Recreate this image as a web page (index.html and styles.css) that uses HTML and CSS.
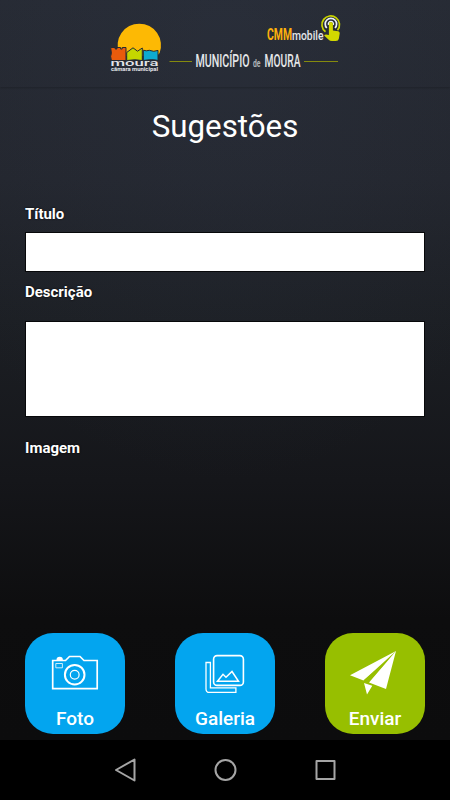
FILE: index.html
```
<!DOCTYPE html>
<html lang="pt">
<head>
    <meta charset="UTF-8">
    <meta name="viewport" content="width=device-width, initial-scale=1.0">
    <title>Sugestões - Município de Moura</title>
    <link rel="stylesheet" href="styles.css">
</head>
<body>
    <header class="header">
        <svg class="logo" width="240" height="70" viewBox="105 10 240 70">
            <!-- Sol e casas -->
            <path d="M119 53A21.7 21.7 0 1 1 159.6 53L157 56H120z" fill="#fdb904"/>
            <g stroke="#252a33" stroke-width="1">
                <path d="M110.7 47.5h4.5v1.5h1.7v-1.5h3.7v1.5h1.6v-1.5h3.8v13h-14.6q-1.6-5 0-7z" fill="#e95b0c"/>
                <path d="M126.7 60.5v-8l6.300-4.700 4.500 3.400 4.800-3.200v12.500q-7-1.400-15.600 0z" fill="#c4d600"/>
                <path d="M143.3 60.5V50.2q3 1.2 6 .1 4.5 2 8.700.1v10.100q-5-1.600-14.700 0z" fill="#0eabd0"/>
            </g>
            <text class="logo-name" x="110.5" y="66" textLength="48" lengthAdjust="spacingAndGlyphs">moura</text>
            <text class="logo-sub" x="111" y="70.6" textLength="47" lengthAdjust="spacingAndGlyphs">câmara municipal</text>
            <!-- Nome do município -->
            <path class="logo-line" d="M169.5 61.5H192M304 61.5h34"/>
            <text class="logo-town" y="67"><tspan x="195.5" textLength="54" lengthAdjust="spacingAndGlyphs">MUNICÍPIO</tspan> <tspan class="logo-de" x="253" textLength="7.5" lengthAdjust="spacingAndGlyphs">de</tspan> <tspan x="264.5" textLength="36" lengthAdjust="spacingAndGlyphs">MOURA</tspan></text>
            <!-- CMMmobile -->
            <text class="logo-app" y="39.7"><tspan class="logo-cmm" x="267" textLength="25" lengthAdjust="spacingAndGlyphs">CMM</tspan><tspan class="logo-mobile" x="292" textLength="31.5" lengthAdjust="spacingAndGlyphs">mobile</tspan></text>
            <g fill="none">
                <path d="M325.5 31.8a8.800 8.800 0 1 1 12-1.500" stroke="#c9d300" stroke-width="1.7"/>
                <path d="M326.8 28a5.700 5.700 0 1 1 8.200 0" stroke="#eef3f7" stroke-width="1.7"/>
                <path d="M328.5 25a2.600 2.600 0 1 1 4.800 0" stroke="#eef3f7" stroke-width="1.3"/>
            </g>
            <path d="M328.9 24a2 2 0 0 1 4 0v6.500l5.300.7q1.700.4 1.500 2.300l-.8 5q-.4 2.500-3 2.500h-4q-2 0-3.500-1.500l-4.300-4q1-1.800 4.800-.4z" fill="#d2d800"/>
        </svg>
    </header>

    <main class="content">
        <h1 class="title">Sugestões</h1>
        <form class="form" action="#" method="POST">
            <label class="label" for="titulo">Título</label>
            <input class="field field-title" type="text" id="titulo" name="titulo">
            <label class="label" for="descricao">Descrição</label>
            <textarea class="field field-text" id="descricao" name="descricao"></textarea>
            <p class="label">Imagem</p>

            <div class="actions">
                <button class="action" type="button">
                    <svg class="action-icon" width="60" height="50" viewBox="45 646 60 50" fill="none" stroke="#fff">
                        <path d="M52.7 660.5h12.8l4-4h10.500l4 4h13.200v28.200H52.7z" stroke-width="1.7"/>
                        <path d="M56.5 660a3.200 3.200 0 0 1 6.400 0z" fill="#fff" stroke="none"/>
                        <path d="M55.8 663.5h6.600v4.300h-6.600z" stroke-width=".8"/>
                        <circle cx="74.7" cy="674.7" r="9.8" stroke-width="2"/>
                        <circle cx="74.7" cy="674.7" r="4.4" stroke-width="1.2"/>
                    </svg>
                    <span>Foto</span>
                </button>
                <button class="action" type="button">
                    <svg class="action-icon" width="60" height="50" viewBox="195 646 60 50" fill="none" stroke="#fff">
                        <rect x="213.6" y="655.6" width="29.8" height="29.8" rx="3.5" stroke-width="1.6"/>
                        <path d="M217.5 681.3l5.500-7 3 3 6-5.800 6.500 9.800z" stroke-width="1.5"/>
                        <path d="M206 662.5h4.400v25.400h25.500v4.500h-26.400q-3.500 0-3.500-3.500z" stroke-width="1.3"/>
                    </svg>
                    <span>Galeria</span>
                </button>
                <button class="action action-send" type="submit">
                    <svg class="action-icon" width="60" height="50" viewBox="345 646 60 50" fill="#fff">
                        <path d="M396 651l-46 24.300 13.500 5.200zM396 651l-27 31.500L386 689zM364 683l8.300 2.800L367 694.500z"/>
                        <path d="M389 659l-25.500 21.500 4.500 2z" fill="#97bf00"/>
                    </svg>
                    <span>Enviar</span>
                </button>
            </div>
        </form>
    </main>

    <nav class="navbar">
        <svg width="24" height="24" viewBox="0 0 24 24"><path d="M21.500 1.500v21L3 12z"/></svg>
        <svg width="24" height="24" viewBox="0 0 24 24"><circle cx="12.5" cy="12" r="10"/></svg>
        <svg width="24" height="24" viewBox="0 0 24 24"><rect x="3.5" y="3" width="18" height="18"/></svg>
    </nav>
</body>
</html>
```
FILE: styles.css
```
* {
    box-sizing: border-box;
}

body {
    margin: 0;
    height: 100vh;
    display: flex;
    flex-direction: column;
    font-family: Roboto, Arial, sans-serif;
    color: #fff;
    background:
        radial-gradient(ellipse 75% 55% at 50% 5%, rgba(50, 58, 75, 0.25), transparent),
        linear-gradient(#262a33 0, #23262e 180px, #1c1f24 320px, #15161a 480px, #0d0d0e 620px, #0c0c0d 740px);
}

.header {
    height: 87px;
    padding: 10px 0 0 105px;
    box-shadow: 0 1px 2px rgba(0, 0, 0, 0.2);
}

.logo {
    display: block;
}

.logo text {
    fill: #e4e6e9;
}

.logo .logo-name {
    font-size: 9.5px;
    font-weight: 500;
}

.logo .logo-sub {
    font-size: 5px;
    font-weight: bold;
}

.logo-line {
    stroke: #858a0e;
    stroke-width: 1;
}

.logo .logo-town {
    font-size: 18px;
    font-weight: 500;
}

.logo .logo-de {
    font-size: 10px;
    font-weight: bold;
    fill: #aeb2b8;
}

.logo .logo-cmm {
    font-size: 16.5px;
    font-weight: bold;
    fill: #fdb10b;
}

.logo .logo-mobile {
    font-size: 13px;
    font-weight: 500;
}

.content {
    flex: 1;
    display: flex;
    flex-direction: column;
    padding: 0 25px 6px;
}

.title {
    margin: 21px 0 60px;
    font-size: 31.3px;
    font-weight: normal;
    line-height: 38px;
    text-align: center;
}

.form {
    flex: 1;
    display: flex;
    flex-direction: column;
}

.label {
    margin: 0;
    font-size: 15px;
    font-weight: bold;
    line-height: 16px;
    text-shadow: 0 0 2px #000;
}

.field {
    display: block;
    width: 400px;
    padding: 8px;
    border: 1px solid #07080a;
    border-radius: 0;
    background: #fff;
    font: inherit;
    resize: none;
    outline: none;
}

.field-title {
    height: 40px;
    margin: 10px 0 12px;
}

.field-text {
    height: 96px;
    margin: 21px 0 23px;
}

.actions {
    display: flex;
    justify-content: space-between;
    margin-top: auto;
}

.action {
    display: flex;
    flex-direction: column;
    align-items: center;
    width: 100px;
    height: 101px;
    padding: 13px 0 0;
    border: none;
    border-radius: 28px;
    background: #03a5ef;
    color: #fff;
    font-family: inherit;
    font-size: 19px;
    font-weight: 500;
    line-height: 22px;
}

.action span {
    margin-top: 12px;
}

.action-send {
    background: #97bf00;
}

.navbar {
    display: flex;
    justify-content: center;
    align-items: center;
    gap: 76px;
    height: 60px;
    background: #000;
}

.navbar svg {
    fill: none;
    stroke: #a5a5a5;
    stroke-width: 2;
    stroke-linejoin: round;
}
```
